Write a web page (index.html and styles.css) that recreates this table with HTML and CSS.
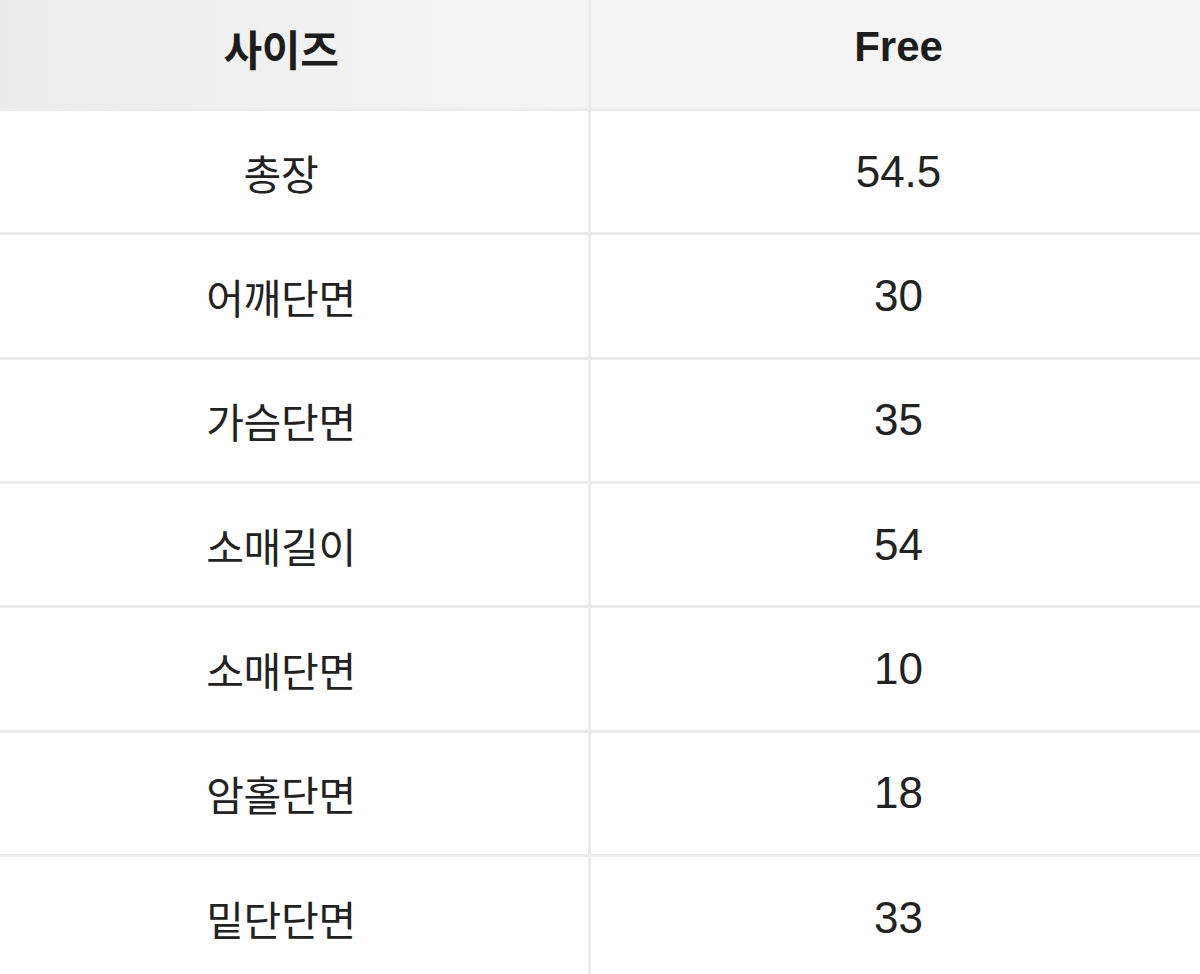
FILE: index.html
```html
<!DOCTYPE html>
<html lang="ko">
<head>
<meta charset="utf-8">
<title>사이즈표</title>
<link rel="stylesheet" href="styles.css">
</head>
<body>
<div class="size-table">
  <div class="cell head label">사이즈</div>
  <div class="cell head value">Free</div>

  <div class="cell label">총장</div>
  <div class="cell value">54.5</div>

  <div class="cell label">어깨단면</div>
  <div class="cell value">30</div>

  <div class="cell label">가슴단면</div>
  <div class="cell value">35</div>

  <div class="cell label">소매길이</div>
  <div class="cell value">54</div>

  <div class="cell label">소매단면</div>
  <div class="cell value">10</div>

  <div class="cell label">암홀단면</div>
  <div class="cell value">18</div>

  <div class="cell label">밑단단면</div>
  <div class="cell value">33</div>
</div>
</body>
</html>
```

FILE: styles.css
```css
html, body {
  margin: 0;
  padding: 0;
  background: #ffffff;
}

body {
  width: 1200px;
  height: 974px;
  overflow: hidden;
  font-family: "Liberation Sans", "Noto Sans CJK KR", sans-serif;
  color: #222222;
}

.size-table {
  display: grid;
  grid-template-columns: 588px 612px;
  grid-template-rows: 111px;
  grid-auto-rows: 124.33px;
  background: #ffffff;
}

.cell {
  display: flex;
  align-items: center;
  justify-content: center;
  border-bottom: 3px solid #ebebeb;
}

.label {
  padding-right: 26px;
  font-family: "Noto Sans CJK KR", "Liberation Sans", sans-serif;
  font-size: 41px;
  letter-spacing: -0.3px;
}

.value {
  border-left: 3px solid #ebebeb;
  padding-left: 6px;
  font-size: 44px;
}

.head {
  background: #f4f4f4;
  padding-bottom: 14px;
  font-weight: bold;
  color: #1c1c1c;
}

.head.label {
  background: linear-gradient(to right, #ebebeb 0%, #f0f0f0 40%, #f4f4f4 100%);
  font-size: 42px;
}

.head.value {
  font-size: 42px;
}
```
